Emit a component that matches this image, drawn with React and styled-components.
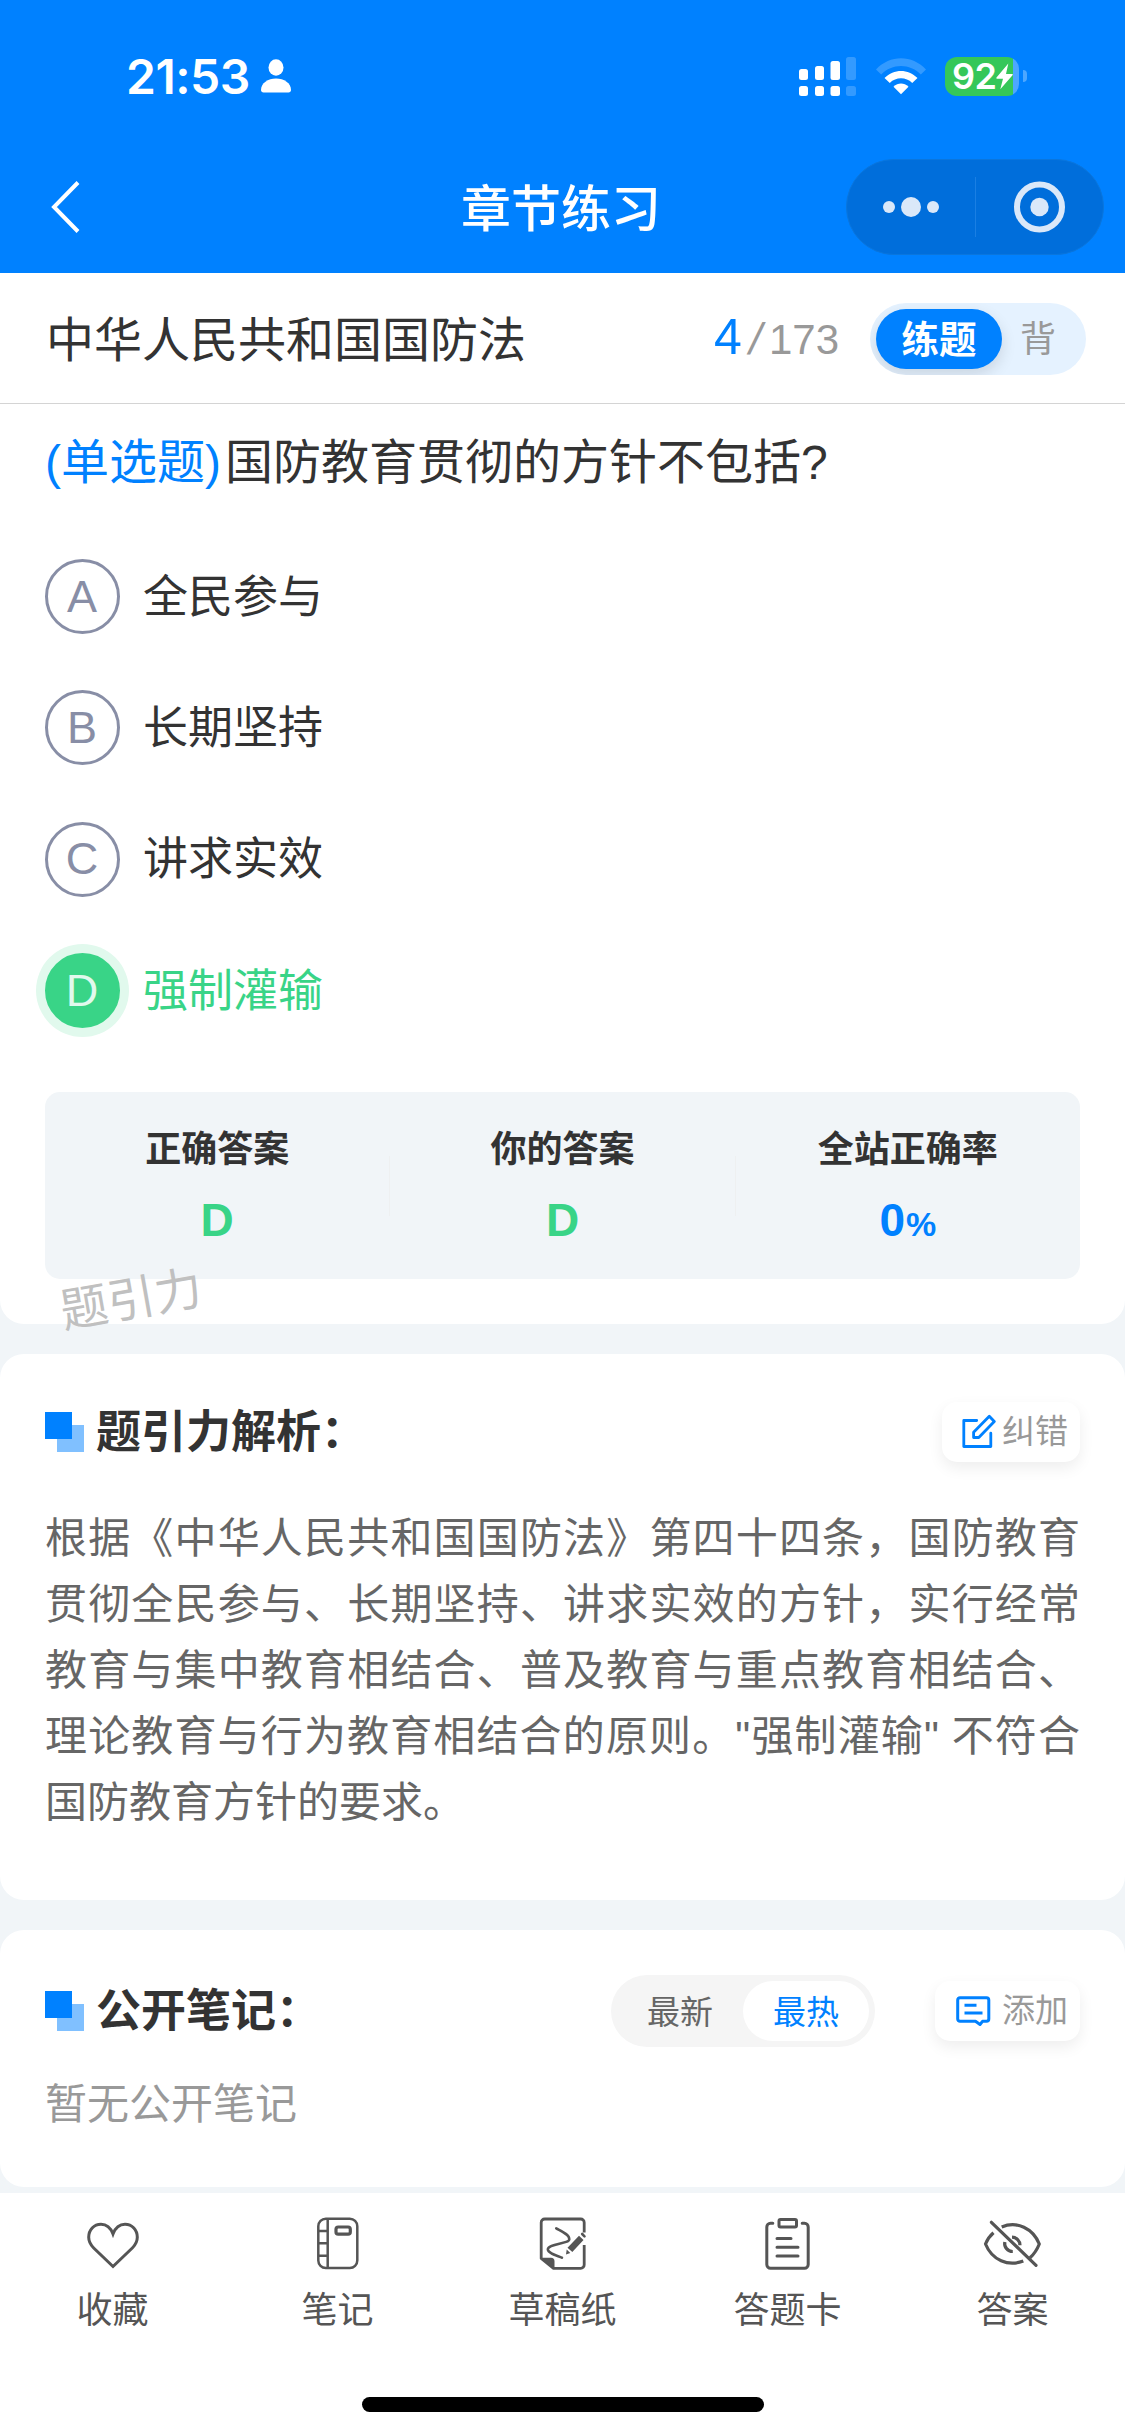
import React from 'react';
import styled, { createGlobalStyle, css } from 'styled-components';

const blue = '#0081ff';
const green = '#39d487';
const pageBg = '#f1f5f8';

const GlobalStyle = createGlobalStyle`
  * {
    box-sizing: border-box;
  }

  body {
    margin: 0;
    background: ${pageBg};
    color: #333;
    font-family: "Liberation Sans", "Noto Sans CJK SC", sans-serif;
    text-spacing-trim: space-all;
  }
`

const Page = styled.div`
  display: flex;
  flex-direction: column;
  width: 1125px;
  height: 2436px;
  overflow: hidden;
  background: ${pageBg};
`

/* ---------- header ---------- */

const Header = styled.header`
  flex: none;
  height: 273px;
  background: ${blue};
  color: #fff;
`

const StatusBar = styled.div`
  display: flex;
  align-items: center;
  justify-content: space-between;
  height: 141px;
  padding: 11px 98px 0 126px;
`

const Clock = styled.div`
  display: flex;
  align-items: center;
  gap: 10px;
  font-family: Inter, sans-serif;
  font-size: 48px;
  font-weight: 600;
  letter-spacing: -0.5px;
`

const StatusIcons = styled.div`
  display: flex;
  align-items: center;
  gap: 19.5px;
`

const Battery = styled.div`
  display: flex;
  align-items: center;
  gap: 4px;
`

const BatteryBody = styled.div`
  display: flex;
  align-items: center;
  width: 74px;
  height: 39px;
  padding-left: 7px;
  border-radius: 12px;
  background: linear-gradient(to right, #35c759 68px, #4da7ff 68px);
  font-family: Inter, sans-serif;
  font-size: 36px;
  font-weight: 600;
  letter-spacing: -0.5px;
`

const BatteryCap = styled.div`
  width: 4px;
  height: 12px;
  border-radius: 0 4px 4px 0;
  background: #4da7ff;
`

const NavBar = styled.div`
  display: grid;
  grid-template-columns: 1fr auto 1fr;
  align-items: center;
  height: 132px;
  padding: 0 21px 0 50px;
`

const NavTitle = styled.h1`
  margin: 0;
  padding-top: 6px;
  font-size: 50px;
  font-weight: 500;
  line-height: 60px;
  transform: translateX(-16px);
`

const Capsule = styled.div`
  display: flex;
  align-items: center;
  justify-self: end;
  width: 258px;
  height: 96px;
  border: 1px solid #0a76dd;
  border-radius: 48px;
  background: #006edb;
`

const CapsuleHalf = styled.div`
  display: flex;
  flex: 1;
  align-items: center;
  justify-content: center;
  height: 60px;

  & + & {
    border-left: 1px solid #1a7fe3;
  }
`

/* ---------- chapter bar ---------- */

const ChapterBar = styled.div`
  display: flex;
  flex: none;
  align-items: center;
  height: 131px;
  padding: 2px 39px 0 46px;
  border-bottom: 1px solid #d4d4d4;
  background: #fff;
`

const ChapterName = styled.div`
  flex: 1;
  padding-top: 4px;
  font-size: 48px;
  line-height: 60px;
`

const Progress = styled.div`
  display: flex;
  align-items: baseline;
  margin-right: 31px;
  padding-bottom: 2px;
  color: #999;
  font-size: 42px;
  line-height: 60px;
`

const Current = styled.span`
  margin-right: 8px;
  color: ${blue};
  font-size: 50px;
`

const Slash = styled.span`
  margin-right: 7px;
  font-size: 44px;
  transform: skewX(-12deg);
`

const ModeSwitch = styled.div`
  display: flex;
  align-items: center;
  width: 216px;
  height: 72px;
  padding: 6px;
  border-radius: 36px;
  background: #e5f2ff;
  overflow: hidden;
`

const ModeItem = styled.div`
  display: flex;
  align-items: center;
  justify-content: center;
  width: ${({ $active }) => ($active ? 126 : 72)}px;
  height: 60px;
  padding-bottom: 6px;
  border-radius: 30px;
  color: #999;
  font-size: 36px;

  ${({ $active }) => $active && css`
    background: ${blue};
    box-shadow: 0 6px 15px rgba(0, 0, 0, 0.12);
    color: #fff;
    font-size: 37.5px;
    font-weight: 700;
  `}
`

/* ---------- cards ---------- */

const Card = styled.section`
  flex: none;
  height: ${({ $height }) => $height}px;
  margin-bottom: 30px;
  padding: 0 45px;
  border-radius: ${({ $flatTop }) => ($flatTop ? '0 0 24px 24px' : '24px')};
  background: #fff;
`

const Question = styled.div`
  padding-top: 29px;
  font-size: 48px;
  line-height: 60px;
`

const QuestionType = styled.span`
  margin-right: 4px;
  color: ${blue};
`

const OptionList = styled.div`
  display: flex;
  flex-direction: column;
  gap: 56.4px;
  padding-top: 66px;
`

const Option = styled.div`
  display: flex;
  align-items: center;
  gap: 23px;
  color: ${({ $correct }) => ($correct ? green : '#333')};
  font-size: 45px;
  line-height: 60px;
`

const OptionText = styled.span`
  padding-top: 2px;
`

const OptionLetter = styled.div`
  display: flex;
  align-items: center;
  justify-content: center;
  width: 75px;
  height: 75px;
  padding-right: 1px;
  border: 3px solid #888ea6;
  border-radius: 50%;
  color: #888ea6;

  ${({ $correct }) => $correct && css`
    border-color: ${green};
    background: ${green};
    box-shadow: 0 0 0 9px #e1f9ed;
    color: #e1f9ed;
  `}
`

const Stats = styled.div`
  display: flex;
  align-items: center;
  height: 187px;
  margin-top: 64px;
  border-radius: 15px;
  background: ${pageBg};
`

const Stat = styled.div`
  display: flex;
  flex: 1;
  flex-direction: column;
  align-items: center;
  justify-content: center;
  height: 60px;

  & + & {
    border-left: 1px solid #eef0f1;
  }
`

const StatLabel = styled.div`
  font-size: 36px;
  font-weight: 700;
  line-height: 50px;
`

const StatValue = styled.div`
  height: 54px;
  margin-top: 18px;
  color: ${({ $color }) => $color};
  font-size: 46px;
  font-weight: 700;
  line-height: 54px;

  small {
    margin-left: 1px;
    font-size: 34px;
    line-height: 1;
  }
`

/* floats over the answer card and the gap under it */
const Watermark = styled.div`
  position: absolute;
  top: 1270px;
  left: 60px;
  color: #c0c0c0;
  font-size: 47.5px;
  line-height: 60px;
  transform: rotate(-10deg);
`

const CardHead = styled.div`
  display: flex;
  align-items: center;
  height: 72px;
  margin-top: ${({ $top }) => $top}px;
`

const Marker = styled.div`
  width: 39px;
  height: 40px;
  background:
    linear-gradient(${blue}, ${blue}) 0 0 / 27px 27px no-repeat,
    linear-gradient(#80c0ff, #80c0ff) 12px 13px / 27px 27px no-repeat;
`

const CardTitle = styled.h2`
  flex: 1;
  margin: 0 0 0 12px;
  padding-top: 2px;
  font-size: 45px;
  font-weight: 700;
  line-height: 60px;
`

const ToolButton = styled.div`
  display: flex;
  align-items: center;
  justify-content: space-between;
  width: ${({ $width }) => $width}px;
  height: 60px;
  padding: 0 12px 0 ${({ $inset }) => $inset}px;
  border-radius: 15px;
  background: #fff;
  box-shadow: 0 6px 15px rgba(0, 0, 0, 0.07);
  color: #999;
  font-size: 33px;
  line-height: 56px;
`

const SortSwitch = styled.div`
  display: flex;
  align-items: center;
  width: 264px;
  height: 72px;
  margin-right: 60px;
  padding: 6px;
  border-radius: 36px;
  background: #f5f5f5;
`

const SortItem = styled.div`
  flex: 1;
  height: 60px;
  border-radius: 30px;
  background: ${({ $active }) => ($active ? '#fff' : 'transparent')};
  color: ${({ $active }) => ($active ? blue : '#666')};
  font-size: 33px;
  line-height: 63px;
  text-align: center;
`

const Explanation = styled.p`
  margin: 38px 0 0;
  color: #666;
  font-size: 42px;
  line-height: 66px;
  text-align: justify;
`

const Empty = styled.p`
  margin: 28px 0 0;
  color: #999;
  font-size: 42px;
  line-height: 60px;
`

/* ---------- bottom tabs ---------- */

const BottomBar = styled.footer`
  display: flex;
  flex: none;
  flex-direction: column;
  align-items: center;
  height: 243px;
  margin-top: -24px;
  background: #fff;
`

const Tabs = styled.nav`
  display: flex;
  width: 100%;
  height: 204px;
  padding-top: 21px;
`

const Tab = styled.div`
  display: flex;
  flex: 1;
  flex-direction: column;
  align-items: center;
  color: #555;
  font-size: 36px;
  line-height: 50px;

  svg {
    margin-bottom: 12px;
  }
`

const HomeIndicator = styled.div`
  width: 402px;
  height: 15px;
  border-radius: 8px;
  background: #000;
`

/* ---------- icons ---------- */

const PersonIcon = () => (
  <svg width="32" height="34" viewBox="0 0 32 34" fill="#fff">
    <ellipse cx="16" cy="8.5" rx="7.5" ry="8.3" />
    <path d="M1 31C1 24 8 19.5 16 19.5S31 24 31 31c0 1.600-1 2.500-2.500 2.500h-25C2 33.500 1 32.600 1 31z" />
  </svg>
);

const SignalIcon = () => (
  <svg width="57" height="39" viewBox="0 0 57 39" fill="#fff">
    <rect x="0" y="12" width="9" height="11" rx="2.500" />
    <rect x="16" y="9" width="9" height="14" rx="2.500" />
    <rect x="31.500" y="4" width="9.500" height="19" rx="2.500" />
    <rect x="47" y="0" width="10" height="23" rx="2.500" opacity="0.2" />
    <rect x="0" y="29" width="9" height="10" rx="2.500" />
    <rect x="16" y="29" width="9" height="10" rx="2.500" />
    <rect x="31.500" y="29" width="9.500" height="10" rx="2.500" />
    <rect x="47" y="29" width="10" height="10" rx="2.500" opacity="0.2" />
  </svg>
);

const WifiIcon = () => (
  <svg width="50" height="37" viewBox="0 0 50 37" fill="#fff">
    <path d="M0 11.500C14-3.500 36-3.500 50 11.500L44.800 16.500C34 5 16 5 5.200 16.500z" opacity="0.2" />
    <path d="M8.500 20C18 10.500 32 10.500 41.500 20L36.200 25C30 18.800 20 18.800 13.800 25z" />
    <path d="M17.500 28.800C22 24.500 28 24.500 32.500 28.800L25 36.300z" />
  </svg>
);

const BoltIcon = () => (
  <svg width="17" height="27" viewBox="0 0 17 27" fill="#fff">
    <path d="M12.300.500L.500 14.500c-.500.600-.200 1.200.500 1.200h6L4.300 26.300 16.500 12.200c.500-.600.200-1.200-.500-1.200h-6z" />
  </svg>
);

const BackIcon = () => (
  <svg width="32" height="54" viewBox="0 0 32 54" fill="none" stroke="#fff" strokeWidth="4">
    <path d="M28 2.500L4 27l24 24.500" />
  </svg>
);

const DotsIcon = () => (
  <svg width="56" height="20" viewBox="0 0 56 20" fill="#dae8f9">
    <circle cx="6" cy="10" r="6" />
    <circle cx="28" cy="10" r="10" />
    <circle cx="50" cy="10" r="6" />
  </svg>
);

const TargetIcon = () => (
  <svg width="52" height="52" viewBox="0 0 52 52" fill="none">
    <circle cx="26.500" cy="26" r="22.500" stroke="#dae8f9" strokeWidth="6" />
    <circle cx="26.500" cy="26" r="9.200" fill="#dae8f9" />
  </svg>
);

const EditIcon = () => (
  <svg width="36" height="36" viewBox="0 0 36 36" fill="none" stroke={blue} strokeWidth="2.800" strokeLinejoin="round" strokeLinecap="round">
    <path d="M16.700 6.500H3.800v26h27V19.200" />
    <path d="M29.300 2.200l5 5.300L18.800 23.500h-5.200v-5.300z" />
  </svg>
);

const NoteAddIcon = () => (
  <svg width="36" height="36" viewBox="0 0 36 36" fill="none" stroke={blue} strokeWidth="3" strokeLinejoin="round">
    <path d="M5 4.700h26.500a2.300 2.300 0 0 1 2.300 2.300v19a2.300 2.300 0 0 1-2.300 2.300H27.500L25 31.500l-4.500-3.200H5A2.300 2.300 0 0 1 2.700 26V7A2.300 2.300 0 0 1 5 4.700z" />
    <path d="M9.500 12.200h12M9.500 20h18" />
  </svg>
);

const TabIcon = ({ children }) => (
  <svg width="60" height="60" viewBox="0 0 60 60" fill="none" stroke="#555" strokeWidth="3" strokeLinecap="round" strokeLinejoin="round">
    {children}
  </svg>
);

const HeartIcon = () => (
  <TabIcon>
    <path strokeLinejoin="miter" d="M30 20C27.500 13.500 23 10.300 18 10.300 10.900 10.300 5.700 16 5.700 23.300c0 4.500 2 7.700 5 10.700L30 52.500 49.300 34c3-3 5-6.200 5-10.700 0-7.300-5.200-13-12.300-13C37 10.300 32.500 13.500 30 20z" />
  </TabIcon>
);

const NotebookIcon = () => (
  <TabIcon>
    <rect x="10.300" y="4.700" width="39" height="49.300" rx="7.500" strokeWidth="2.500" />
    <path strokeWidth="2.500" strokeLinecap="butt" d="M19.700 5v49M10.500 17h9M10.500 29.300h9M10.500 41.700h9" />
    <rect x="28" y="13" width="14.300" height="7.200" rx="2.200" strokeWidth="3.200" />
  </TabIcon>
);

const DraftIcon = () => (
  <TabIcon>
    <path strokeLinecap="butt" strokeWidth="2.800" d="M51.200 18.500V8.500a3.500 3.500 0 0 0-3.500-3.500h-36a3.500 3.500 0 0 0-3.500 3.500v36L20.500 54.300h27.200a3.500 3.500 0 0 0 3.500-3.500V31" />
    <path fill="#555" stroke="none" d="M8 43.800h10a3.500 3.500 0 0 1 3.500 3.500v8z" />
    <path strokeWidth="2.500" d="M23.200 14.300C29 17.500 36.500 20.500 36.300 25.300c-.3 4.500-21.300 4.500-21.500 10-.1 3.500 8 6.200 14.200 8.400" />
    <path fill="#555" stroke="none" d="M46 21.700l4.500 4.300-11.200 12-4.800-4.300zM33.700 35.500l3.600 3.400-4.300 1.700z" />
    <path strokeWidth="2.600" d="M49.200 20l2.300 2.300" />
  </TabIcon>
);

const AnswerSheetIcon = () => (
  <TabIcon>
    <path d="M14.800 9.300h-2.300a3.700 3.700 0 0 0-3.700 3.700v37.500a3.700 3.700 0 0 0 3.700 3.700h34a3.700 3.700 0 0 0 3.700-3.700V13a3.700 3.700 0 0 0-3.700-3.700h-2.300" />
    <rect x="21" y="5.500" width="17.500" height="7.500" rx="1.500" strokeWidth="3" />
    <path strokeWidth="3" d="M19 24.500h14M19 33.300h21M19 42h21" />
  </TabIcon>
);

const EyeOffIcon = () => (
  <TabIcon>
    <g strokeLinecap="butt" strokeWidth="3.200">
      <path strokeLinecap="round" d="M8.400 8.300l44.600 43" />
      <path d="M18.700 13C34 6.500 50 14.500 56.300 30 54 35.800 51 40.200 47 43.800" />
      <path d="M10.500 18.700C7 21.700 4.200 25.500 2.500 30 9 46 25 53 40.300 47" />
      <path d="M29 23.200a8 8 0 0 1 8 8" />
      <path d="M21.800 28a8 8 0 0 0 8 9.500" />
    </g>
  </TabIcon>
);

/* ---------- data ---------- */

const options = [
  { letter: 'A', text: '全民参与' },
  { letter: 'B', text: '长期坚持' },
  { letter: 'C', text: '讲求实效' },
  { letter: 'D', text: '强制灌输', correct: true },
];

const tabs = [
  { label: '收藏', Icon: HeartIcon },
  { label: '笔记', Icon: NotebookIcon },
  { label: '草稿纸', Icon: DraftIcon },
  { label: '答题卡', Icon: AnswerSheetIcon },
  { label: '答案', Icon: EyeOffIcon },
];

const App = () => {
  return (
    <Page>
      <GlobalStyle />
      <Header>
        <StatusBar>
          <Clock>21:53<PersonIcon /></Clock>
          <StatusIcons>
            <SignalIcon />
            <WifiIcon />
            <Battery>
              <BatteryBody>92<BoltIcon /></BatteryBody>
              <BatteryCap />
            </Battery>
          </StatusIcons>
        </StatusBar>
        <NavBar>
          <BackIcon />
          <NavTitle>章节练习</NavTitle>
          <Capsule>
            <CapsuleHalf><DotsIcon /></CapsuleHalf>
            <CapsuleHalf><TargetIcon /></CapsuleHalf>
          </Capsule>
        </NavBar>
      </Header>

      <ChapterBar>
        <ChapterName>中华人民共和国国防法</ChapterName>
        <Progress>
          <Current>4</Current>
          <Slash>/</Slash>
          <span>173</span>
        </Progress>
        <ModeSwitch>
          <ModeItem $active>练题</ModeItem>
          <ModeItem>背</ModeItem>
        </ModeSwitch>
      </ChapterBar>

      <Card $height={920} $flatTop>
        <Question>
          <QuestionType>(单选题)</QuestionType>国防教育贯彻的方针不包括?
        </Question>
        <OptionList>
          {options.map(({ letter, text, correct }) => (
            <Option key={letter} $correct={correct}>
              <OptionLetter $correct={correct}>{letter}</OptionLetter>
              <OptionText>{text}</OptionText>
            </Option>
          ))}
        </OptionList>
        <Stats>
          <Stat>
            <StatLabel>正确答案</StatLabel>
            <StatValue $color={green}>D</StatValue>
          </Stat>
          <Stat>
            <StatLabel>你的答案</StatLabel>
            <StatValue $color={green}>D</StatValue>
          </Stat>
          <Stat>
            <StatLabel>全站正确率</StatLabel>
            <StatValue $color={blue}>0<small>%</small></StatValue>
          </Stat>
        </Stats>
      </Card>
      <Watermark>题引力</Watermark>

      <Card $height={546}>
        <CardHead $top={42}>
          <Marker />
          <CardTitle>{'题引力解析\uff1a'}</CardTitle>
          <ToolButton $width={138} $inset={18}><EditIcon />纠错</ToolButton>
        </CardHead>
        <Explanation>
          {'根据《中华人民共和国国防法》第四十四条\uff0c国防教育贯彻全民参与、长期坚持、讲求实效的方针\uff0c实行经常教育与集中教育相结合、普及教育与重点教育相结合、理论教育与行为教育相结合的原则。"强制灌输" 不符合国防教育方针的要求。'}
        </Explanation>
      </Card>

      <Card $height={257}>
        <CardHead $top={45}>
          <Marker />
          <CardTitle>{'公开笔记\uff1a'}</CardTitle>
          <SortSwitch>
            <SortItem>最新</SortItem>
            <SortItem $active>最热</SortItem>
          </SortSwitch>
          <ToolButton $width={145} $inset={20}><NoteAddIcon />添加</ToolButton>
        </CardHead>
        <Empty>暂无公开笔记</Empty>
      </Card>

      <BottomBar>
        <Tabs>
          {tabs.map(({ label, Icon }) => (
            <Tab key={label}>
              <Icon />
              {label}
            </Tab>
          ))}
        </Tabs>
        <HomeIndicator />
      </BottomBar>
    </Page>
  );
}

export default App;
